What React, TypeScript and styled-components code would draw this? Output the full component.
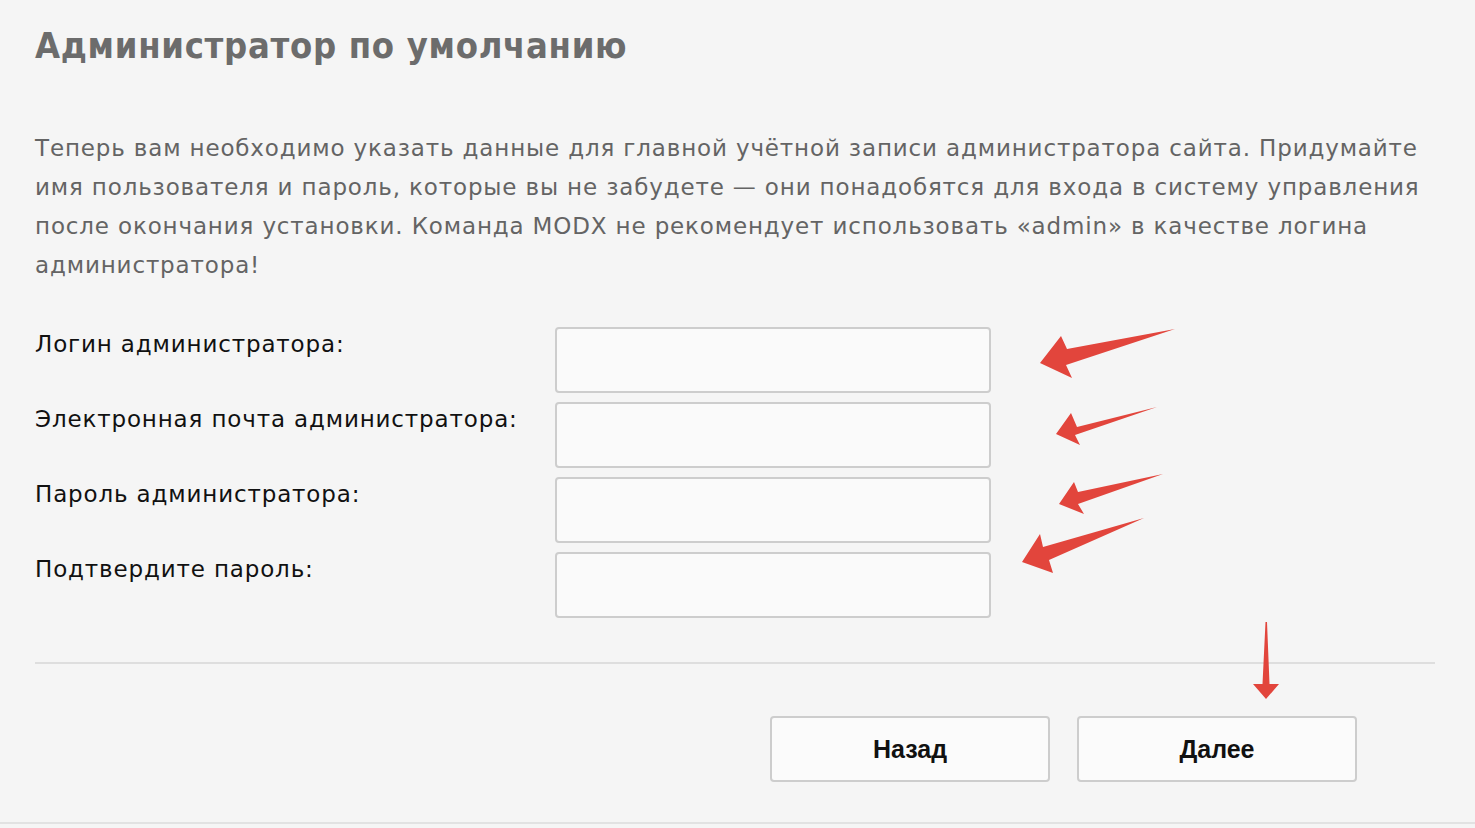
import React from "react";
import styled, { createGlobalStyle } from "styled-components";

const Global = createGlobalStyle`
  html, body { margin: 0; padding: 0; background: #f5f5f5; }
  body { font-family: "DejaVu Sans", "Noto Sans", sans-serif; }
  * { box-sizing: border-box; }
`;

const Page = styled.div`
  position: relative;
  height: 824px;
  padding: 0 40px 0 35px;
  border-bottom: 2px solid #e2e2e2;
  background: #f5f5f5;
`;

const Title = styled.h1`
  margin: 0;
  padding-top: 22px;
  font-family: "DejaVu Sans Condensed", "DejaVu Sans", sans-serif;
  font-weight: bold;
  font-size: 36px;
  line-height: 48px;
  letter-spacing: 0.7px;
  color: #6c6c6c;
`;

const Intro = styled.p`
  margin: 59px 0 0;
  font-size: 23px;
  line-height: 39px;
  letter-spacing: 0.85px;
  color: #646464;
  white-space: nowrap;
`;

const Form = styled.div`
  display: grid;
  grid-template-columns: 520px 436px;
  row-gap: 9px;
  margin-top: 42px;
`;

const Label = styled.label`
  font-size: 23px;
  line-height: 30px;
  letter-spacing: 0.85px;
  padding-top: 2px;
  color: #111;
`;

const Input = styled.input`
  height: 66px;
  width: 436px;
  border: 2px solid #cdcdcd;
  border-radius: 4px;
  background: #fafafa;
  outline: none;
`;

const Divider = styled.hr`
  margin: 44px 0 0;
  border: 0;
  border-top: 2px solid #dedede;
`;

const Actions = styled.div`
  display: flex;
  justify-content: flex-end;
  gap: 27px;
  padding: 52px 78px 0 0;
`;

const Button = styled.button`
  width: 280px;
  height: 66px;
  border: 2px solid #cdcdcd;
  border-radius: 4px;
  background: #fbfbfb;
  font-family: "Liberation Sans", Arial, sans-serif;
  font-weight: bold;
  font-size: 25px;
  color: #111;
`;

const Arrows = styled.svg`
  position: absolute;
  left: 0;
  top: 0;
  width: 1475px;
  height: 828px;
  pointer-events: none;
`;

const fields = [
  "Логин администратора:",
  "Электронная почта администратора:",
  "Пароль администратора:",
  "Подтвердите пароль:",
];

const arrowShapes = [
  "1040,363 1061,336 1067,349 1175,329 1066,365 1072,378",
  "1056,434 1071,413 1077,427 1157,407 1075,435 1080,445",
  "1059,504 1074,482 1078,492 1163,474 1078,504 1084,514",
  "1022,562 1040,534 1043,547 1144,518 1049,560 1053,573",
  "1265.5,622 1267,622 1269.5,684 1279,684 1266,699 1253,684 1262.5,684",
];

export default function App() {
  return (
    <>
      <Global />
      <Page>
        <Title>Администратор по умолчанию</Title>
        <Intro>
          Теперь вам необходимо указать данные для главной учётной записи администратора сайта. Придумайте
          <br />
          имя пользователя и пароль, которые вы не забудете — они понадобятся для входа в систему управления
          <br />
          после окончания установки. Команда MODX не рекомендует использовать «admin» в качестве логина
          <br />
          администратора!
        </Intro>
        <Form>
          {fields.map((f) => (
            <React.Fragment key={f}>
              <Label>{f}</Label>
              <Input type="text" />
            </React.Fragment>
          ))}
        </Form>
        <Divider />
        <Actions>
          <Button>Назад</Button>
          <Button>Далее</Button>
        </Actions>
        <Arrows viewBox="0 0 1475 828">
          {arrowShapes.map((p) => (
            <polygon key={p} points={p} fill="#e2453c" />
          ))}
        </Arrows>
      </Page>
    </>
  );
}
